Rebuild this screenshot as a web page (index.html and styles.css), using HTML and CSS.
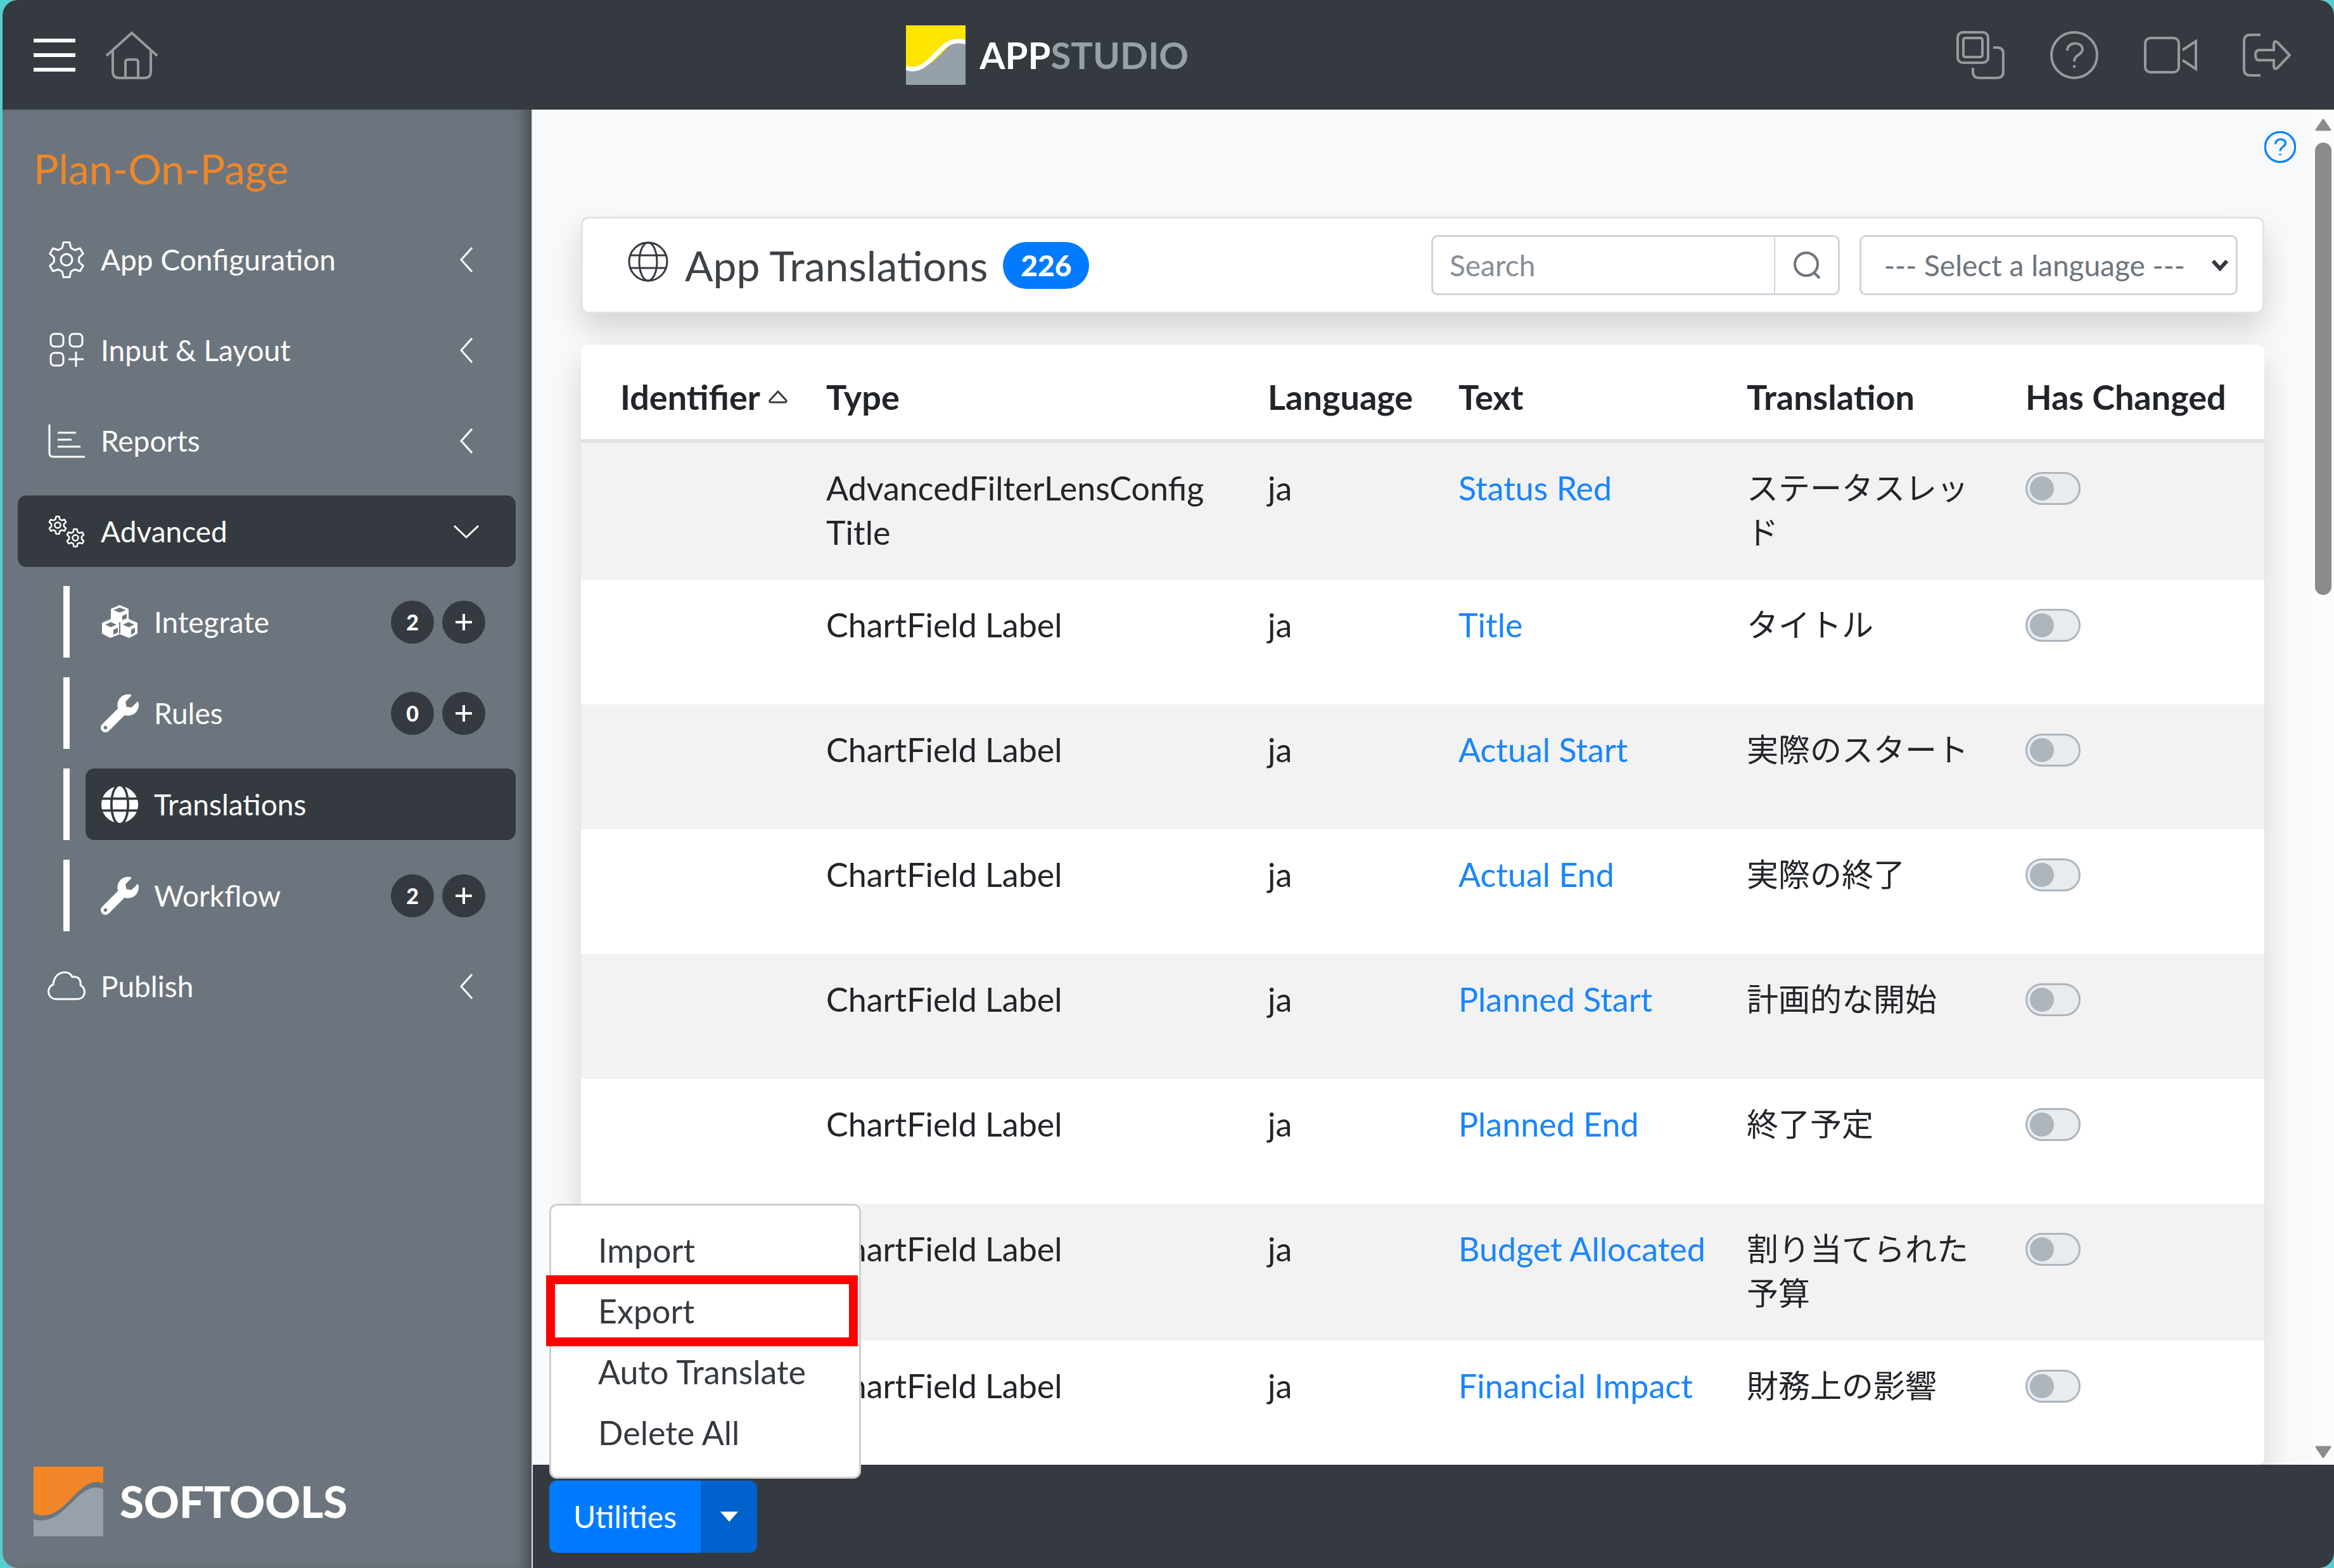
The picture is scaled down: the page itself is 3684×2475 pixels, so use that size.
FILE: index.html
```html
<!DOCTYPE html>
<html lang="en">
<head>
    <meta charset="UTF-8">
    <meta name="viewport" content="width=device-width, initial-scale=1.0">
    <title>AppStudio - App Translations</title>
    <link rel="stylesheet" href="styles.css">
</head>
<body>
    <!-- Shared icons -->
    <svg class="sprite" aria-hidden="true">
        <symbol id="gear" viewBox="-30 -30 60 60">
            <path d="M-6.8-18.8 -4.9-27.6H4.9L6.8-18.8 12.9-15.3 21.4-18 26.3-9.6 19.7-3.5V3.5L26.3 9.6 21.4 18 12.9 15.3 6.8 18.8 4.9 27.6H-4.9L-6.8 18.8 -12.9 15.3 -21.4 18 -26.3 9.6 -19.7 3.5V-3.5L-26.3-9.6 -21.4-18 -12.9-15.3Z"/>
            <circle r="9"/>
        </symbol>
        <symbol id="chevron-left" viewBox="0 0 24 44"><path d="M21 3 4 22 21 41"/></symbol>
        <symbol id="wrench" viewBox="0 0 512 512">
            <path d="M507.73 109.1c-2.24-9.03-13.54-12.09-20.12-5.51l-74.36 74.36-67.88-11.31-11.31-67.88 74.36-74.36c6.62-6.62 3.43-17.9-5.66-20.16-47.38-11.74-99.55.91-136.58 37.93-39.64 39.64-50.55 97.1-34.05 147.2L18.74 402.76c-24.99 24.99-24.99 65.51 0 90.5 24.99 24.99 65.51 24.99 90.5 0l213.21-213.21c50.12 16.71 107.47 5.68 147.37-34.22 37.07-37.07 49.7-89.32 37.91-136.73zM64 472c-13.25 0-24-10.75-24-24 0-13.26 10.75-24 24-24s24 10.74 24 24c0 13.25-10.75 24-24 24z"/>
        </symbol>
        <symbol id="help" viewBox="0 0 76 76">
            <circle cx="38" cy="38" r="36"/>
            <path d="M27 31C27 16 51 16 51 29C51 38 38 37 38 48"/>
            <path d="M38 54v4"/>
        </symbol>
        <symbol id="plus" viewBox="0 0 28 28"><path d="M14 1v26M1 14h26"/></symbol>
    </svg>

    <div class="app">
        <header class="topbar">
            <div class="topbar-group">
                <button class="icon-btn" aria-label="Menu">
                    <svg class="menu-icon" viewBox="0 0 66 54"><path d="M0 4h66M0 27h66M0 50h66"/></svg>
                </button>
                <a href="#" class="icon-btn" aria-label="Home">
                    <svg class="home-icon" viewBox="0 0 84 76"><path d="M2 39 42 3 82 39M12 30V64Q12 74 22 74H62Q72 74 72 64V30M32 74V49Q32 45 36 45H48Q52 45 52 49V74"/></svg>
                </a>
            </div>
            <div class="brand">
                <svg class="brand-logo" viewBox="0 0 94 94">
                    <path d="M0 0H94V94H0Z" fill="#96a0a8"/>
                    <path d="M0 0H94V25C63 17 54 67 12 69Q5 69 0 67Z" fill="#ffe600"/>
                    <path d="M0 67C34 81 51 25 80 25Q88 24 94 27" fill="none" stroke="#fff" stroke-width="7"/>
                </svg>
                <span class="brand-name">APP<span>STUDIO</span></span>
            </div>
            <div class="topbar-group topbar-tools">
                <button class="icon-btn" aria-label="Apps">
                    <svg class="tool-icon" viewBox="0 0 76 76"><rect x="2" y="2" width="48" height="48" rx="8"/><rect x="11" y="11" width="30" height="30" rx="3"/><path d="M58 26H64Q74 26 74 36V64Q74 74 64 74H36Q26 74 26 64V58"/></svg>
                </button>
                <button class="icon-btn" aria-label="Help">
                    <svg class="tool-icon"><use href="#help"/></svg>
                </button>
                <button class="icon-btn" aria-label="Video">
                    <svg class="tool-icon tool-wide" viewBox="0 0 84 76"><rect x="2" y="11" width="53" height="54" rx="8"/><path d="M61 30 82 16V60L61 46"/></svg>
                </button>
                <button class="icon-btn" aria-label="Sign out">
                    <svg class="tool-icon" viewBox="0 0 76 76"><path d="M28 6H12Q2 6 2 16V60Q2 70 12 70H28M49 30H26Q20 30 20 38T26 46H49V56Q50 62 55 58L74 38 55 18Q50 14 49 20Z"/></svg>
                </button>
            </div>
        </header>

        <div class="body">
            <aside class="sidebar">
                <h1 class="app-name">Plan-On-Page</h1>
                <nav class="nav">
                    <a href="#" class="nav-item">
                        <svg class="nav-icon line"><use href="#gear"/></svg>
                        <span>App Configuration</span>
                        <svg class="chevron"><use href="#chevron-left"/></svg>
                    </a>
                    <a href="#" class="nav-item">
                        <svg class="nav-icon line" viewBox="0 0 60 60"><rect x="5" y="4" width="20" height="20" rx="6"/><rect x="35" y="4" width="20" height="20" rx="6"/><rect x="5" y="34" width="20" height="20" rx="6"/><path d="M45 32v24M33 44h24"/></svg>
                        <span>Input &amp; Layout</span>
                        <svg class="chevron"><use href="#chevron-left"/></svg>
                    </a>
                    <a href="#" class="nav-item">
                        <svg class="nav-icon line" viewBox="0 0 60 60"><path d="M3 4V49Q3 55 9 55H59M16 17H45M16 28H38M16 39H52"/></svg>
                        <span>Reports</span>
                        <svg class="chevron"><use href="#chevron-left"/></svg>
                    </a>
                    <a href="#" class="nav-item active">
                        <svg class="nav-icon line" viewBox="0 0 60 60"><use href="#gear" class="small-gear" x="1" y="5" width="30" height="30"/><use href="#gear" class="small-gear" x="29" y="25" width="30" height="30"/></svg>
                        <span>Advanced</span>
                        <svg class="chevron chevron-down" viewBox="0 0 44 24"><path d="M3 3 22 21 41 3"/></svg>
                    </a>
                    <div class="subnav">
                        <div class="sub-row">
                            <a href="#" class="sub-item">
                                <svg class="nav-icon solid" viewBox="0 0 60 60">
                                    <path d="M30 3 44 9V25L58 31V48L45 55 30 49 15 55 2 48V31L16 25V9Z"/>
                                    <path class="cut" d="M20 11 30 7 40 11 30 15ZM34 20 41 17V24L34 27ZM7 34 16 30 25 34 16 38ZM20 42 27 39V46L20 50ZM35 34 44 30 53 34 44 38ZM48 42 54 39V46L48 50Z"/>
                                    <path class="gap" d="M30 30V48"/>
                                </svg>
                                <span>Integrate</span>
                            </a>
                            <span class="count">2</span>
                            <button class="add" aria-label="Add integration"><svg><use href="#plus"/></svg></button>
                        </div>
                        <div class="sub-row">
                            <a href="#" class="sub-item">
                                <svg class="nav-icon solid"><use href="#wrench"/></svg>
                                <span>Rules</span>
                            </a>
                            <span class="count">0</span>
                            <button class="add" aria-label="Add rule"><svg><use href="#plus"/></svg></button>
                        </div>
                        <div class="sub-row selected">
                            <a href="#" class="sub-item">
                                <svg class="nav-icon solid" viewBox="0 0 496 512"><path d="M336.5 160C322 70.7 287.8 8 248 8s-74 62.7-88.5 152h177zM152 256c0 22.2 1.2 43.5 3.3 64h185.3c2.1-20.5 3.3-41.8 3.3-64s-1.2-43.5-3.3-64H155.3c-2.1 20.5-3.3 41.8-3.3 64zm324.7-96c-28.6-67.9-86.5-120.4-158-141.6 24.4 33.8 41.2 84.7 50 141.6h108zM177.2 18.4C105.8 39.6 47.8 92.1 19.3 160h108c8.7-56.9 25.5-107.8 49.9-141.6zM487.4 192H372.7c2.1 21 3.3 42.5 3.3 64s-1.2 43-3.3 64h114.6c5.5-20.5 8.6-41.8 8.6-64s-3.1-43.5-8.5-64zM120 256c0-21.5 1.2-43 3.3-64H8.6C3.2 212.5 0 233.8 0 256s3.2 43.5 8.6 64h114.6c-2-21-3.2-42.5-3.2-64zm39.5 96c14.5 89.3 48.7 152 88.5 152s74-62.7 88.5-152h-177zm159.3 141.6c71.4-21.2 129.4-73.7 158-141.6h-108c-8.8 56.9-25.6 107.8-50 141.6zM19.3 352c28.6 67.9 86.5 120.4 158 141.6-24.4-33.8-41.2-84.7-50-141.6h-108z"/></svg>
                                <span>Translations</span>
                            </a>
                        </div>
                        <div class="sub-row">
                            <a href="#" class="sub-item">
                                <svg class="nav-icon solid"><use href="#wrench"/></svg>
                                <span>Workflow</span>
                            </a>
                            <span class="count">2</span>
                            <button class="add" aria-label="Add workflow"><svg><use href="#plus"/></svg></button>
                        </div>
                    </div>
                    <a href="#" class="nav-item">
                        <svg class="nav-icon line" viewBox="0 0 60 60"><path d="M13 50C-1 49-2 31 9 27C11 5 34 3 39 15C49 13 53 20 52 28C62 34 60 49 48 50Z"/></svg>
                        <span>Publish</span>
                        <svg class="chevron"><use href="#chevron-left"/></svg>
                    </a>
                </nav>
                <div class="vendor">
                    <svg class="vendor-logo" viewBox="0 0 110 110">
                        <path d="M0 0H110V26C72 13 55 77 15 77Q5 77 0 73Z" fill="#f08627"/>
                        <path d="M110 110H0V83C44 97 66 33 98 33Q105 33 110 36Z" fill="#98a0aa"/>
                    </svg>
                    <span>SOFTOOLS</span>
                </div>
            </aside>

            <main class="main">
                <div class="scroll-area">
                    <div class="content">
                        <a href="#" class="page-help" aria-label="Page help"><svg><use href="#help"/></svg></a>

                        <section class="title-card">
                            <svg class="title-icon" viewBox="0 0 64 64"><circle cx="32" cy="32" r="30"/><ellipse cx="32" cy="32" rx="14" ry="30"/><path d="M5 22H59M5 42H59"/></svg>
                            <h2>App Translations</h2>
                            <span class="pill">226</span>
                            <div class="search">
                                <input type="text" placeholder="Search" aria-label="Search">
                                <button aria-label="Search">
                                    <svg viewBox="0 0 44 44"><circle cx="21" cy="20" r="18"/><path d="M33 33 42 42"/></svg>
                                </button>
                            </div>
                            <div class="select-wrap">
                                <select aria-label="Language">
                                    <option>--- Select a language ---</option>
                                </select>
                                <svg viewBox="0 0 28 20"><path d="M3 3 14 15 25 3"/></svg>
                            </div>
                        </section>

                        <table class="grid">
                            <thead>
                                <tr>
                                    <th class="col-id">Identifier <svg class="sort" viewBox="0 0 32 22"><path d="M16 3 29 17Q30 20 27 20H5Q2 20 3 17Z"/></svg></th>
                                    <th>Type</th>
                                    <th class="col-lang">Language</th>
                                    <th class="col-text">Text</th>
                                    <th class="col-trans">Translation</th>
                                    <th class="col-changed">Has Changed</th>
                                </tr>
                            </thead>
                            <tbody>
                                <tr>
                                    <td></td><td>AdvancedFilterLensConfig Title</td><td>ja</td>
                                    <td><a href="#">Status Red</a></td><td lang="ja">ステータスレッド</td>
                                    <td><input type="checkbox" class="switch" aria-label="Status Red has changed"></td>
                                </tr>
                                <tr>
                                    <td></td><td>ChartField Label</td><td>ja</td>
                                    <td><a href="#">Title</a></td><td lang="ja">タイトル</td>
                                    <td><input type="checkbox" class="switch" aria-label="Title has changed"></td>
                                </tr>
                                <tr>
                                    <td></td><td>ChartField Label</td><td>ja</td>
                                    <td><a href="#">Actual Start</a></td><td lang="ja">実際のスタート</td>
                                    <td><input type="checkbox" class="switch" aria-label="Actual Start has changed"></td>
                                </tr>
                                <tr>
                                    <td></td><td>ChartField Label</td><td>ja</td>
                                    <td><a href="#">Actual End</a></td><td lang="ja">実際の終了</td>
                                    <td><input type="checkbox" class="switch" aria-label="Actual End has changed"></td>
                                </tr>
                                <tr>
                                    <td></td><td>ChartField Label</td><td>ja</td>
                                    <td><a href="#">Planned Start</a></td><td lang="ja">計画的な開始</td>
                                    <td><input type="checkbox" class="switch" aria-label="Planned Start has changed"></td>
                                </tr>
                                <tr>
                                    <td></td><td>ChartField Label</td><td>ja</td>
                                    <td><a href="#">Planned End</a></td><td lang="ja">終了予定</td>
                                    <td><input type="checkbox" class="switch" aria-label="Planned End has changed"></td>
                                </tr>
                                <tr>
                                    <td></td><td>ChartField Label</td><td>ja</td>
                                    <td><a href="#">Budget Allocated</a></td><td lang="ja">割り当てられた予算</td>
                                    <td><input type="checkbox" class="switch" aria-label="Budget Allocated has changed"></td>
                                </tr>
                                <tr>
                                    <td></td><td>ChartField Label</td><td>ja</td>
                                    <td><a href="#">Financial Impact</a></td><td lang="ja">財務上の影響</td>
                                    <td><input type="checkbox" class="switch" aria-label="Financial Impact has changed"></td>
                                </tr>
                            </tbody>
                        </table>
                    </div>
                    <div class="scrollbar" aria-hidden="true">
                        <svg viewBox="0 0 26 20"><path d="M13 2 24 18H2Z"/></svg>
                        <div class="track"><div class="thumb"></div></div>
                        <svg viewBox="0 0 26 20"><path d="M13 18 24 2H2Z"/></svg>
                    </div>
                </div>

                <footer class="footer">
                    <div class="btn-group">
                        <button class="btn">Utilities</button>
                        <button class="btn btn-toggle" aria-label="Open utilities menu"><svg viewBox="0 0 28 16"><path d="M0 0H28L14 16Z"/></svg></button>
                        <div class="menu">
                            <a href="#">Import</a>
                            <a href="#" class="highlight">Export</a>
                            <a href="#">Auto Translate</a>
                            <a href="#">Delete All</a>
                        </div>
                    </div>
                </footer>
            </main>
        </div>
    </div>
</body>
</html>
```
FILE: styles.css
```css
* {
    box-sizing: border-box;
}
body {
    margin: 0;
    background-color: #54cfd0; /* Shows behind the rounded window corners */
    color: #212529;
    font-family: Lato, "Noto Sans CJK JP", sans-serif;
    font-size: 52px;
    line-height: 70px;
}
a {
    color: inherit;
    text-decoration: none;
}
button, input, select {
    font: inherit;
    color: inherit;
    margin: 0;
}
button {
    border: 0;
    padding: 0;
    background: none;
    cursor: pointer;
}
svg {
    display: block;
    flex: none;
}
.sprite {
    position: absolute;
    width: 0;
    height: 0;
}
.app {
    display: flex;
    flex-direction: column;
    height: 100vh;
    margin-left: 4px;
    border-radius: 24px;
    overflow: hidden;
    background-color: #f8f9fb;
}

/* Top bar */
.topbar {
    display: grid;
    grid-template-columns: 19fr auto 24fr; /* Brand sits a little left of centre */
    align-items: center;
    height: 173px;
    flex: none;
    padding: 0 68px 0 49px;
    background-color: #343a40;
}
.topbar-group {
    display: flex;
    align-items: center;
    gap: 47px;
}
.topbar-tools {
    justify-content: flex-end;
    gap: 72px;
}
.icon-btn svg {
    fill: none;
    stroke: #969a9d;
    stroke-width: 4;
}
.icon-btn .menu-icon {
    width: 66px;
    height: 54px;
    stroke: #fff;
    stroke-width: 6;
}
.home-icon {
    width: 84px;
    height: 76px;
}
.tool-icon {
    width: 76px;
    height: 76px;
}
.tool-wide {
    width: 84px;
}
.brand {
    display: flex;
    align-items: center;
    gap: 22px;
}
.brand-logo {
    width: 94px;
    height: 94px;
}
.brand-name {
    color: #fff;
    font-size: 58px;
    font-weight: 700;
}
.brand-name span {
    color: #96a0a8;
}

/* Sidebar */
.body {
    display: flex;
    flex: 1;
    min-height: 0;
}
.sidebar {
    display: flex;
    flex-direction: column;
    width: 837px;
    flex: none;
    padding: 58px 25px 50px 24px;
    background-color: #6c757d;
    border-right: 2px solid #e4e6e8;
    box-shadow: inset -22px 0 22px -14px rgba(0, 0, 0, 0.4);
    color: #fff;
}
.app-name {
    margin: 0 25px 52px;
    color: #f08627;
    font-size: 66px;
    font-weight: 400;
    line-height: 70px;
}
.nav {
    display: flex;
    flex-direction: column;
    gap: 30px;
    font-size: 46px;
}
.nav-item {
    display: flex;
    align-items: center;
    gap: 24px;
    height: 113px;
    padding: 0 56px 0 47px;
    border-radius: 14px;
}
.nav-item.active,
.selected .sub-item {
    background-color: #343a40;
}
.nav-icon {
    width: 60px;
    height: 60px;
}
.line {
    fill: none;
    stroke: #fff;
    stroke-width: 3;
    stroke-linejoin: round;
}
.small-gear {
    stroke-width: 5;
}
.solid {
    fill: #fff;
}
.cut {
    fill: #6c757d;
}
.gap {
    stroke: #6c757d;
    stroke-width: 2;
}
.chevron {
    width: 24px;
    height: 44px;
    margin-left: auto;
    margin-right: 10px;
    fill: none;
    stroke: #fff;
    stroke-width: 3;
}
.chevron-down {
    width: 44px;
    height: 24px;
    margin-right: 0;
}
.subnav {
    display: flex;
    flex-direction: column;
    gap: 31px;
    padding-left: 72px;
}
.sub-row {
    display: flex;
    align-items: center;
    height: 113px;
    padding: 0 48px 0 25px;
    border-left: 10px solid #fff;
}
.sub-row.selected {
    padding-right: 0;
}
.sub-item {
    display: flex;
    flex: 1;
    align-items: center;
    gap: 24px;
    height: 100%;
    padding-left: 24px;
    border-radius: 14px;
}
.count,
.add {
    display: flex;
    align-items: center;
    justify-content: center;
    width: 68px;
    height: 68px;
    border-radius: 50%;
    background-color: #343a40;
    font-size: 34px;
    font-weight: 900;
}
.add {
    margin-left: 13px;
}
.add svg {
    width: 28px;
    height: 28px;
    stroke: #fff;
    stroke-width: 4;
}
.vendor {
    display: flex;
    align-items: center;
    gap: 26px;
    margin: auto 0 0 25px;
    font-size: 69px;
    font-weight: 900;
}
.vendor-logo {
    width: 110px;
    height: 110px;
}

/* Main area */
.main {
    display: flex;
    flex: 1;
    flex-direction: column;
    min-width: 0;
}
.scroll-area {
    display: flex;
    flex: 1;
    min-height: 0;
    overflow: hidden;
}
.content {
    flex: 1;
    min-width: 0;
    padding: 34px 76px 0;
}
.page-help {
    display: block;
    width: 50px;
    margin: 0 -50px 85px auto;
}
.page-help svg {
    width: 50px;
    height: 50px;
    fill: none;
    stroke: #0a84ff;
    stroke-width: 5;
}
.title-card {
    display: flex;
    align-items: center;
    height: 153px;
    margin-bottom: 49px;
    padding: 0 39px 0 71px;
    border: 3px solid #e2e3e4;
    border-radius: 12px;
    background-color: #fff;
    box-shadow: 0 24px 48px rgba(0, 0, 0, 0.15);
}
.title-icon {
    width: 64px;
    height: 64px;
    margin-bottom: 12px;
    fill: none;
    stroke: #343a40;
    stroke-width: 3;
}
.title-card h2 {
    margin: 0 24px 0 26px;
    color: #3d4247;
    font-size: 66px;
    font-weight: 400;
}
.pill {
    padding: 2px 28px;
    border-radius: 37px;
    background-color: #007bff;
    color: #fff;
    font-size: 46px;
    font-weight: 900;
}
.search {
    display: flex;
    width: 645px;
    height: 95px;
    margin-left: auto;
    border: 3px solid #ced4da;
    border-radius: 10px;
    color: #6c757d;
}
.search input {
    flex: 1;
    min-width: 0;
    padding: 0 26px;
    border: 0;
    border-radius: 10px;
    background: none;
    font-size: 46px;
}
.search input::placeholder {
    color: #868e96;
    opacity: 1;
}
.search button {
    width: 101px;
    border-left: 2px solid #ced4da;
}
.search svg {
    width: 44px;
    height: 44px;
    margin: 0 auto;
    fill: none;
    stroke: #6c757d;
    stroke-width: 4;
}
.select-wrap {
    position: relative;
    width: 597px;
    margin-left: 31px;
}
.select-wrap select {
    display: block;
    width: 100%;
    height: 95px;
    padding: 0 36px;
    appearance: none;
    border: 3px solid #ced4da;
    border-radius: 10px;
    background-color: #fff;
    color: #6c757d;
    font-size: 46px;
}
.select-wrap svg {
    position: absolute;
    top: 38px;
    right: 14px;
    width: 28px;
    height: 20px;
    fill: none;
    stroke: #343a40;
    stroke-width: 6;
    pointer-events: none;
}

/* Translations table */
.grid {
    width: 100%;
    table-layout: fixed;
    border-spacing: 0;
    border-radius: 12px;
    background-color: #fff;
    box-shadow: 0 24px 48px rgba(0, 0, 0, 0.15);
}
.grid th,
.grid td {
    padding: 36px 20px 40px 35px;
    text-align: left;
    vertical-align: top;
}
.grid th {
    height: 155px;
    padding-top: 48px;
    padding-bottom: 31px;
    border-bottom: 6px solid #dee2e6;
    font-size: 54px;
    font-weight: 700;
    white-space: nowrap;
}
.grid td {
    height: 197px;
}
.grid td:lang(ja) {
    font-size: 50px;
}
.grid tbody tr:nth-child(odd) {
    background-color: #f2f2f2;
}
.grid a {
    color: #1a85ff;
}
.grid .col-id {
    width: 352px;
    padding-left: 62px;
    padding-right: 0;
}
.col-lang {
    width: 301px;
}
.col-text {
    width: 455px;
}
.col-trans {
    width: 440px;
}
.col-changed {
    width: 412px;
}
.sort {
    display: inline-block;
    width: 32px;
    height: 22px;
    margin-bottom: 10px;
    fill: none;
    stroke: #343a40;
    stroke-width: 3;
}
.switch {
    display: block;
    width: 87px;
    height: 52px;
    margin-top: 10px;
    padding: 4px;
    appearance: none;
    border: 3px solid #adb5bd;
    border-radius: 26px;
    background-color: #e9ecef;
}
.switch::before {
    content: "";
    display: block;
    width: 38px;
    height: 38px;
    border-radius: 50%;
    background-color: #adb5bd;
}
.switch:checked::before {
    margin-left: auto;
}

/* Page scrollbar */
.scrollbar {
    display: flex;
    flex-direction: column;
    align-items: center;
    gap: 18px;
    width: 34px;
    padding: 14px 0 10px;
    background-color: #fcfcfc;
}
.scrollbar svg {
    width: 26px;
    height: 20px;
    fill: #8b8b8b;
    stroke: #8b8b8b;
    stroke-width: 3;
    stroke-linejoin: round;
}
.track {
    flex: 1;
    width: 26px;
}
.thumb {
    height: 35%;
    border-radius: 13px;
    background-color: #8b8b8b;
}

/* Footer */
.footer {
    display: flex;
    flex: none;
    align-items: center;
    height: 163px;
    padding: 0 26px;
    background-color: #343a40;
}
.btn-group {
    position: relative;
    display: flex;
    color: #fff;
}
.btn {
    height: 114px;
    width: 239px;
    border-radius: 12px 0 0 12px;
    background-color: #007bff;
    font-size: 48px;
}
.btn-toggle {
    width: 89px;
    border-radius: 0 12px 12px 0;
    background-color: #0062cc;
}
.btn-toggle svg {
    width: 28px;
    height: 16px;
    margin: 0 auto;
    fill: #fff;
}
.menu {
    position: absolute;
    bottom: 100%;
    left: 0;
    width: 492px;
    margin-bottom: 3px;
    padding: 22px 0;
    border: 3px solid #cfcfcf;
    border-radius: 12px;
    background-color: #fff;
    color: #343a40;
}
.menu a {
    position: relative;
    display: block;
    padding: 13px 74px;
}
.highlight::after {
    content: "";
    position: absolute;
    inset: -8px 2px -8px -8px;
    border: 14px solid #f00;
}
```
